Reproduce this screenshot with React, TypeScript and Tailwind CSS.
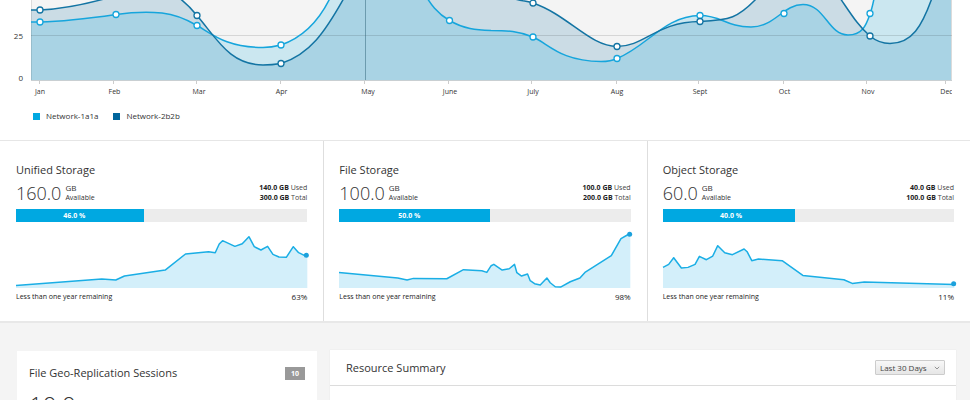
import React from "react";

const MONTHS = [
  { name: "Jan", tick: 40, x: 40 },
  { name: "Feb", tick: 114, x: 114.5 },
  { name: "Mar", tick: 197, x: 199 },
  { name: "Apr", tick: 281, x: 281.5 },
  { name: "May", tick: 365, x: 368 },
  { name: "June", tick: 449, x: 450 },
  { name: "July", tick: 532, x: 533 },
  { name: "Aug", tick: 617, x: 617 },
  { name: "Sept", tick: 699, x: 700 },
  { name: "Oct", tick: 784, x: 784.5 },
  { name: "Nov", tick: 867, x: 868 },
  { name: "Dec", tick: 946, x: 946.5 },
];

const LINE_A =
  "M31 22 H40 C66 21.5 92 18 116 14.5 C134 12 150 12 162 13 C176 14.5 186 19 197 25.5 C212 34 226 47.5 263 47.5 C270 47.5 275 46.5 281 45 C301 38 318 24 331 -4 L420 -14 C431 6 438 14 449.5 20.5 C464 29 476 30 491 30.5 C508 30.5 518 31 533 37 C549 44 560 61 601 61.5 C607 61.5 612 61 617 58.5 C648 46 664 16 700 15.5 C722 15.5 726 27 751 27 C775 27 783 4.5 803 4.5 C825 4.5 828 35 848 35 C862 35 866 26 870 14 C872 9 873 4 875 -6 L951 -6";
const LINE_B =
  "M31 10 H40 C60 9 82 5 104 -1 L140 -12 L178 -3 C186 3 191 8 197 15.5 C217 39 230 65 263 65 C270 65 275 64.5 281 63.5 C310 54 325 32 344 -2 L512 -2 C520 1 527 1 533 3 C568 15 590 46.5 617 46.5 C645 46.5 656 22 700 21.5 C730 20 738 18 757 -2 L840 -2 C851 14 859 27 870 36 C876 41 882 43.5 890 43.5 C912 43.5 922 26 932 -2 L951 -40";

const POINTS_A = [[40, 22], [116, 14.5], [197, 25.5], [281, 45], [449.5, 20.5], [533, 37], [617, 58.5], [700, 15.5], [784, 13.5], [870, 13.5]];
const POINTS_B = [[40, 10], [197, 15.5], [281, 63.5], [533, 3], [617, 46.5], [700, 21.5], [870, 36]];

function NetworkChart() {
  return (
    <svg viewBox="0 0 952 100" className="block w-full" role="img" aria-label="Network usage by month">
      <rect x="31" y="0" width="921" height="80" fill="#f4f4f4" />
      <path d={`${LINE_B} V80 H31 Z`} fill="#00659c" fillOpacity="0.165" />
      <path d={`${LINE_A} V80 H31 Z`} fill="#00a8e1" fillOpacity="0.165" />
      <path d="M31 35.5 H952" stroke="#000" strokeOpacity="0.12" />
      <path d="M31.5 0 V80 M951.5 0 V80" stroke="#000" strokeOpacity="0.1" />
      <path d="M365.5 0 V80" stroke="#2f6478" strokeOpacity="0.5" />
      <path d="M31 80.5 H952" stroke="#c9cfd2" />
      {MONTHS.map((m) => (
        <path key={m.name} d={`M${m.tick - 0.5} 81 V84`} stroke="#ccc" />
      ))}
      <path d={LINE_A} fill="none" stroke="#16a5dc" strokeWidth="1.5" />
      <path d={LINE_B} fill="none" stroke="#1374a3" strokeWidth="1.5" />
      {POINTS_A.map(([x, y]) => (
        <circle key={x} cx={x} cy={y} r="3" fill="#fff" stroke="#16a5dc" strokeWidth="1.3" />
      ))}
      {POINTS_B.map(([x, y]) => (
        <circle key={x} cx={x} cy={y} r="3" fill="#fff" stroke="#1374a3" strokeWidth="1.3" />
      ))}
      <g fill="#333" fontSize="8" textAnchor="end">
        <text x="23" y="39">25</text>
        <text x="23" y="81">0</text>
      </g>
      <g fill="#333" fontSize="7" textAnchor="middle">
        {MONTHS.map((m) => (
          <text key={m.name} x={m.x} y="94">{m.name}</text>
        ))}
      </g>
    </svg>
  );
}

type Storage = {
  title: string;
  available: string;
  used: string;
  total: string;
  percent: string;
  fill: number;
  labelSpan: number;
  trend: string;
  end: [number, number];
  remaining: string;
};

const STORAGE: Storage[] = [
  {
    title: "Unified Storage",
    available: "160.0",
    used: "140.0 GB",
    total: "300.0 GB",
    percent: "46.0 %",
    fill: 43.8,
    labelSpan: 40,
    trend:
      "0,166 257,147 299,150 325,138 447,120 508,72 577,65 597,68 609,42 619,32 656,49 678,41 698,20 714,50 734,60 754,49 770,73 788,81 810,82 831,50 847,68 864,76 873,76",
    end: [870, 76],
    remaining: "63%",
  },
  {
    title: "File Storage",
    available: "100.0",
    used: "100.0 GB",
    total: "200.0 GB",
    percent: "50.0 %",
    fill: 51.6,
    labelSpan: 48,
    trend:
      "0,127 176,144 204,150 223,145 323,146 373,119 428,122 443,127 456,107 464,103 489,120 510,116 526,103 533,128 547,138 565,132 573,152 586,161 603,165 623,144 633,158 648,170 664,171 693,155 722,144 737,127 816,77 845,26 864,15 873,13",
    end: [871, 13],
    remaining: "98%",
  },
  {
    title: "Object Storage",
    available: "60.0",
    used: "40.0 GB",
    total: "100.0 GB",
    percent: "40.0 %",
    fill: 45.4,
    labelSpan: 47,
    trend:
      "0,112 17,103 32,83 55,114 75,112 96,103 109,79 130,89 149,78 164,47 185,68 208,74 243,57 252,65 266,92 286,87 357,92 419,136 542,149 567,160 603,156 873,163",
    end: [871, 161],
    remaining: "11%",
  },
];

function StorageCard({ item }: { item: Storage }) {
  return (
    <section className="border-[#dedede] px-4 pt-5 pb-[18px] not-first:border-l not-first:pl-[15px]">
      <h2 className="text-[11px] leading-[18px] text-[#333]">{item.title}</h2>
      <div className="mt-[2px] flex h-6 items-center">
        <span className="text-[18px] leading-6 font-light text-[#333]">{item.available}</span>
        <div className="ml-1 text-[8px] leading-[10px] text-[#333]">
          <div>GB</div>
          <div className="text-[7px]">Available</div>
        </div>
        <div className="ml-auto text-right text-[7px] leading-[10px] text-[#444]">
          <div><b className="text-[#222]">{item.used}</b> Used</div>
          <div><b className="text-[#222]">{item.total}</b> Total</div>
        </div>
      </div>
      <div className="relative mt-1 h-[13px] bg-[#ececec]">
        <div className="h-full bg-[#00a8e1]" style={{ width: `${item.fill}%` }} />
        <div
          className="absolute inset-y-0 left-0 text-center text-[7px] leading-[13px] font-bold text-white"
          style={{ width: `${item.labelSpan}%` }}
        >
          {item.percent}
        </div>
      </div>
      <svg viewBox="0 0 873 174" className="mt-2 block w-full overflow-visible" aria-hidden="true">
        <polygon points={`${item.trend} 873,174 0,174`} fill="#d3effa" />
        <polyline points={item.trend} fill="none" stroke="#1aaee5" strokeWidth="4.5" strokeLinejoin="round" />
        <circle cx={item.end[0]} cy={item.end[1]} r="7.5" fill="#1ba1dc" />
      </svg>
      <div className="mt-[3px] flex items-center justify-between leading-3 text-[#222]">
        <span className="text-[7px]">Less than one year remaining</span>
        <span className="text-[8px]">{item.remaining}</span>
      </div>
    </section>
  );
}

function LegendItem({ name, swatch }: { name: string; swatch: string }) {
  return (
    <li className="flex items-center gap-[6px]">
      <span className={`size-[7px] ${swatch}`} />
      {name}
    </li>
  );
}

export default function App() {
  return (
    <main className="h-screen overflow-hidden bg-[#f4f4f4] font-['Open_Sans','Noto_Sans',sans-serif] text-[#333]">
      <div className="border-b-2 border-[#e8e8e8] bg-white">
        <div className="pr-[18px]">
          <NetworkChart />
        </div>
        <ul className="flex gap-[15px] pt-[10px] pb-[18px] pl-[33px] text-[8px] leading-3">
          <LegendItem name="Network-1a1a" swatch="bg-[#00a8e1]" />
          <LegendItem name="Network-2b2b" swatch="bg-[#00659c]" />
        </ul>
        <div className="grid grid-cols-3 border-t border-[#e6e6e6]">
          {STORAGE.map((item) => (
            <StorageCard key={item.title} item={item} />
          ))}
        </div>
      </div>
      <div className="grid grid-cols-[300px_1fr] items-start gap-[13px] pt-[27px] pr-[14px] pl-[17px]">
        <section className="mt-px bg-white px-3 pt-[13px] pb-4">
          <div className="flex items-center justify-between">
            <h2 className="text-[11px] leading-[18px]">File Geo-Replication Sessions</h2>
            <span className="w-5 bg-[#999] text-center text-[7px] leading-[13px] font-bold text-white">10</span>
          </div>
          <div className="mt-[7px] text-[24px] leading-8 font-light text-[#333]">10.0</div>
        </section>
        <section className="bg-white pb-16 shadow-[0_0_1px_#ddd]">
          <div className="flex h-9 items-center justify-between border-b border-[#dcdcdc] pr-[11px] pl-4">
            <h2 className="text-[11px] leading-[18px]">Resource Summary</h2>
            <div className="relative">
              <select
                aria-label="Time range"
                className="block h-[15px] w-[70px] appearance-none rounded-[1px] border border-[#ccc] bg-linear-to-b from-[#f8f8f8] to-[#e6e6e6] pl-1 text-[8px] leading-[13px] text-[#444]"
              >
                <option>Last 30 Days</option>
              </select>
              <svg viewBox="0 0 6 4" className="pointer-events-none absolute top-[6px] right-[5px] w-[6px]" aria-hidden="true">
                <path d="M0.8 0.8 L3 3 L5.2 0.8" fill="none" stroke="#888" strokeWidth="0.9" />
              </svg>
            </div>
          </div>
        </section>
      </div>
    </main>
  );
}
